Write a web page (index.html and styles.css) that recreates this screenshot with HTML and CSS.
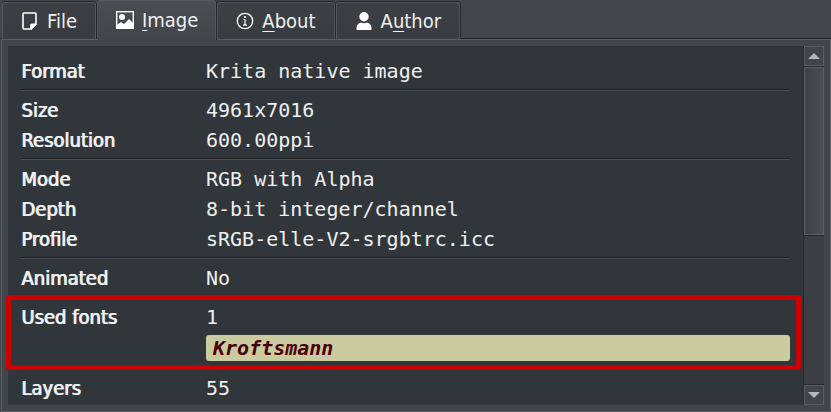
FILE: index.html
```html
<!DOCTYPE html>
<html lang="en">
<head>
<meta charset="utf-8">
<title>Image information</title>
<link rel="stylesheet" href="styles.css">
</head>
<body>
<nav class="tabs" role="tablist">
  <button class="tab" type="button" role="tab" aria-selected="false">
    <svg class="icon" viewBox="0 0 18 18" aria-hidden="true"><path d="M3 1h11q1 0 1 1v10l-5 5H3q-1 0-1-1V2q0-1 1-1z" fill="none" stroke="#fff" stroke-width="1.6"/><path d="M9 17.500v-4q0-2 2-2h4.500v1l-5 5z" fill="#fff"/></svg>
    <span>File</span>
  </button>
  <button class="tab active" type="button" role="tab" aria-selected="true">
    <svg class="icon" viewBox="0 0 18 18" aria-hidden="true"><rect x=".7" y=".7" width="16.600" height="16.600" fill="none" stroke="#fff" stroke-width="1.400"/><circle cx="6" cy="6" r="3" fill="#fff"/><path d="M1 17v-3l4-3 3 2 5-5 4 4v5z" fill="#fff"/></svg>
    <span><u>I</u>mage</span>
  </button>
  <button class="tab" type="button" role="tab" aria-selected="false">
    <svg class="icon" viewBox="0 0 18 18" aria-hidden="true"><circle cx="9" cy="9" r="7.700" fill="none" stroke="#fff" stroke-width="1.300"/><circle cx="9" cy="5" r="1.100" fill="#fff"/><path d="M7.500 7.500H9v5.500M7 13.200h4" fill="none" stroke="#fff" stroke-width="1.200"/></svg>
    <span><u>A</u>bout</span>
  </button>
  <button class="tab" type="button" role="tab" aria-selected="false">
    <svg class="icon" viewBox="0 0 18 18" aria-hidden="true"><circle cx="9" cy="4.700" r="4.700" fill="#fff"/><path d="M1.500 18v-2q0-4.500 4.500-5.500 3 1.500 6 0 4.500 1 4.500 5.500v2z" fill="#fff"/></svg>
    <span>A<u>u</u>thor</span>
  </button>
</nav>
<main class="panel">
  <div class="view">
    <section class="content">
      <dl class="group">
        <dt>Format</dt><dd>Krita native image</dd>
      </dl>
      <dl class="group">
        <dt>Size</dt><dd>4961x7016</dd>
        <dt>Resolution</dt><dd>600.00ppi</dd>
      </dl>
      <dl class="group">
        <dt>Mode</dt><dd>RGB with Alpha</dd>
        <dt>Depth</dt><dd>8-bit integer/channel</dd>
        <dt>Profile</dt><dd>sRGB-elle-V2-srgbtrc.icc</dd>
      </dl>
      <dl class="group">
        <dt>Animated</dt><dd>No</dd>
      </dl>
      <dl class="group marked">
        <dt>Used fonts</dt><dd>1</dd>
        <dd class="font">Kroftsmann</dd>
      </dl>
      <dl class="group">
        <dt>Layers</dt><dd>55</dd>
      </dl>
    </section>
    <div class="scrollbar">
      <button class="arrow" type="button" aria-label="Scroll up"><svg viewBox="0 0 12 6" aria-hidden="true"><path d="M0 6 6 0l6 6z"/></svg></button>
      <div class="track"><div class="thumb"></div></div>
      <button class="arrow" type="button" aria-label="Scroll down"><svg viewBox="0 0 12 6" aria-hidden="true"><path d="M0 0h12L6 6z"/></svg></button>
    </div>
  </div>
</main>
</body>
</html>
```
FILE: styles.css
```css
* {
  box-sizing: border-box;
}

body {
  margin: 0;
  height: 100vh;
  display: flex;
  flex-direction: column;
  background: #424549;
  color: #eff0f1;
  font: 20px/30px "DejaVu Sans Condensed", "DejaVu Sans", sans-serif;
}

button {
  font: inherit;
  color: inherit;
  padding: 0;
}

.tabs {
  display: flex;
  align-items: flex-end;
  gap: 1px;
  height: 39px;
  padding-left: 2px;
  background: linear-gradient(#424549 38px, #222529 38px);
}

.tab {
  display: flex;
  align-items: center;
  gap: 8px;
  height: 37px;
  padding: 0 18px;
  border: 1px solid #54575b;
  border-bottom: 0;
  border-radius: 3px 3px 0 0;
  background: linear-gradient(#3c3f43, #383b3f);
  box-shadow: 0 -1px #232629, 1px 0 #232629;
}

.tab.active {
  position: relative;
  z-index: 1;
  height: 40px;
  margin-bottom: -1px;
  padding: 0 17px 2px 18px;
  background: linear-gradient(#4a4d51, #424549);
}

.icon {
  width: 18px;
  height: 18px;
}

u {
  text-underline-offset: 3px;
  text-decoration-thickness: 1px;
}

.panel {
  flex: 1;
  min-height: 0;
  margin-left: 1px;
  padding: 6px;
  border: 1px solid #5b5e62;
}

.view {
  display: flex;
  height: 100%;
  background: #31363a;
}

.content {
  flex: 1;
  min-width: 0;
  padding: 10px 13px 0;
}

.group {
  display: grid;
  grid-template-columns: 185px 1fr;
  margin: 0;
  position: relative;
}

.group + .group {
  margin-top: 3px;
  padding-top: 5px;
  border-top: 1px solid #1e2125;
  box-shadow: inset 0 1px #4a4e55;
}

dt {
  text-shadow: 1px 0 currentColor;
}

dd {
  margin: 0;
  font-family: "DejaVu Sans Mono", monospace;
}

.font {
  grid-column: 2;
  height: 26px;
  margin: 3px 0;
  padding: 0 7px;
  border-radius: 3px;
  background: #cbcba2;
  color: #4b0000;
  font-weight: bold;
  font-style: oblique;
  line-height: 26px;
}

.marked {
  z-index: 1;
}

.marked::after {
  content: "";
  position: absolute;
  inset: -2px -11px -6px -15px;
  border: 5px solid #cc0000;
  border-radius: 3px;
}

.scrollbar {
  display: flex;
  flex-direction: column;
  width: 21px;
  border-left: 1px solid #25282c;
  background: #3b3e42;
}

.arrow {
  display: flex;
  align-items: center;
  justify-content: center;
  height: 20px;
  border: 1px solid #5b5e62;
  background: #414448;
}

.arrow svg {
  width: 12px;
  height: 6px;
  fill: #b4b6b7;
}

.track {
  flex: 1;
  border: solid #25282c;
  border-width: 1px 0;
}

.thumb {
  height: 53%;
  border: 1px solid #5b5e62;
  background: linear-gradient(90deg, #3e4145, #4a4d51);
  box-shadow: 0 1px #25282c;
}
```
